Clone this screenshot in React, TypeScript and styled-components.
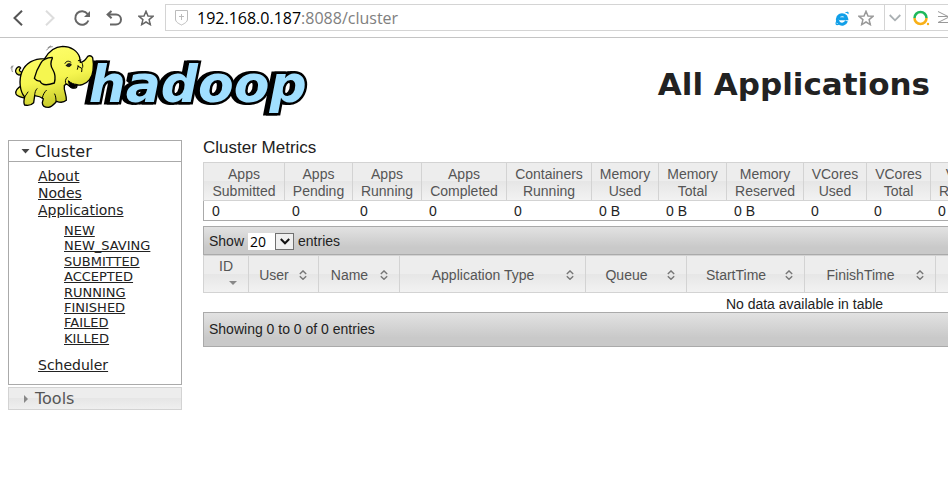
import React from "react";
import styled, { createGlobalStyle } from "styled-components";

const sans = `"Liberation Sans", Arial, sans-serif`;
const wide = `"DejaVu Sans", Verdana, sans-serif`;

const GlobalStyle = createGlobalStyle`
  *, *::before, *::after { box-sizing: border-box; }
  body { margin: 0; background: #fff; color: #222; font: 14px/17px ${sans}; }
`;

const Page = styled.div`
  overflow: hidden;
  padding-bottom: 64px;
`;

const BrowserBar = styled.header`
  display: flex;
  align-items: center;
  height: 38px;
  border-bottom: 1px solid #c4c4c4;
`;

const NavButtons = styled.nav`
  display: flex;
  gap: 8px;
  padding: 0 7px 2px 6px;
`;

const IconButton = styled.button`
  display: grid;
  place-items: center;
  width: 24px;
  height: 24px;
  padding: 0;
  border: 0;
  background: none;
`;

const AddressBar = styled.div`
  display: flex;
  flex: 1;
  align-items: center;
  height: 27px;
  margin-bottom: 2px;
  padding-left: 8px;
  border: 1px solid #d4d4d4;
  border-right: 0;
`;

const Address = styled.a`
  flex: 1;
  margin-left: 8px;
  color: #808080;
  font: 16px/24px "Open Sans", "Noto Sans", sans-serif;
  text-decoration: none;
`;

const Host = styled.span`
  color: #000;
`;

const DropButton = styled(IconButton)`
  width: 22px;
  height: 25px;
  margin-left: 6px;
  border: solid #d4d4d4;
  border-width: 0 1px;
`;

const SearchButton = styled(IconButton)`
  width: 42px;
  justify-items: start;
  padding-left: 6px;
`;

const Banner = styled.div`
  display: flex;
  align-items: flex-start;
  justify-content: space-between;
  height: 102px;
  padding-right: 18px;
`;

const Title = styled.h1`
  margin: 26px 0 0;
  font: bold 31px/40px ${wide};
  white-space: nowrap;
`;

const Wordmark = styled.text`
  font: italic bold 156px ${wide};
  fill: #a0dfff;
  stroke: #000;
  stroke-width: 15px;
  stroke-linejoin: miter;
  stroke-miterlimit: 2;
  paint-order: stroke;
  filter: drop-shadow(-9px 0 0 #000);
`;

const Columns = styled.div`
  display: flex;
  align-items: flex-start;
  gap: 21px;
  padding-left: 8px;
`;

const Sidebar = styled.aside`
  flex: none;
  width: 174px;
  font-family: ${wide};
`;

const SectionHead = styled.button<{ $open?: boolean }>`
  display: flex;
  align-items: center;
  gap: 5px;
  width: 100%;
  height: ${(p) => (p.$open ? 22 : 23)}px;
  margin-top: ${(p) => (p.$open ? 0 : 2)}px;
  padding: 1px 12px 0;
  border: 1px solid ${(p) => (p.$open ? "#aaa" : "#d3d3d3")};
  background: ${(p) => (p.$open ? "#fff" : "linear-gradient(#ededed 0 50%, #e6e6e6 50%, #efefef)")};
  color: ${(p) => (p.$open ? "#222" : "#555")};
  font: 16px/20px ${wide};
`;

const SectionBody = styled.div`
  height: 223px;
  padding: 6px 0 0 29px;
  border: 1px solid #aaa;
  border-top: 0;
`;

const MenuList = styled.ul`
  margin: 0;
  padding: 0;
  list-style: none;
`;

const SubList = styled(MenuList)`
  display: grid;
  grid-auto-rows: 1fr;
  height: 123px;
  margin: 4px 0 11px 26px;
  font-size: 13px;
  line-height: 15px;
`;

const MenuLink = styled.a`
  color: #222;
  text-decoration: underline;
`;

const Main = styled.main`
  flex: none;
  width: max-content;
`;

const TableTitle = styled.h2`
  margin: 0;
  padding-bottom: 7px;
  font: 17px/15px ${sans};
`;

const Table = styled.table`
  table-layout: fixed;
  width: 1203px;
  border-collapse: separate;
  border-spacing: 0;
`;

const MetricsTable = styled(Table)`
  margin-bottom: 5px;
  border-bottom: 1px solid #aaa;
`;

const HeadCell = styled.th`
  padding: 0;
  border: solid #d3d3d3;
  border-width: 1px 0 1px 1px;
  background: linear-gradient(#ededed 0 50%, #e6e6e6 50%, #f2f2f2);
  color: #555;
  font-weight: normal;
`;

const MetricHead = styled(HeadCell)`
  height: 38px;
  padding-top: 3px;
`;

const DataHead = styled(HeadCell)`
  height: 38px;
`;

const MetricCell = styled.td`
  height: 19px;
  padding: 1px 0 0 8px;
  line-height: 17px;

  &:first-child {
    border-left: 1px solid #aaa;
  }
`;

const ToolBar = styled.div<{ $foot?: boolean }>`
  display: flex;
  align-items: center;
  height: ${(p) => (p.$foot ? 35 : 29)}px;
  padding: ${(p) => (p.$foot ? 0 : 2)}px 5px 0;
  border: 1px solid #aaa;
  background: linear-gradient(#e2e2e2, #c9c9c9 75%);
`;

const EntriesLabel = styled.label`
  display: flex;
  align-items: center;
  gap: 4px;
`;

const SelectBox = styled.span`
  display: grid;
  grid-template-columns: 27px 19px;
  align-items: center;
  background: #fff;
`;

const EntriesSelect = styled.select`
  grid-area: 1 / 1 / 2 / 3;
  width: 46px;
  height: 17px;
  padding: 0 0 0 2px;
  border: 0;
  background: none;
  color: #000;
  font: 14px/16px "Open Sans", sans-serif;
  appearance: none;
`;

const SelectArrow = styled.span`
  display: grid;
  grid-area: 1 / 2;
  place-items: center;
  height: 17px;
  border: 1px solid #707070;
  background: #f0f0f0;
  pointer-events: none;
`;

const SortButton = styled.button<{ $stacked?: boolean }>`
  display: flex;
  flex-direction: ${(p) => (p.$stacked ? "column" : "row")};
  align-items: center;
  justify-content: center;
  width: 100%;
  padding: ${(p) => (p.$stacked ? "0" : "2px 11px 0 0")};
  border: 0;
  background: none;
  color: inherit;
  font: 14px/17px ${sans};
`;

const SortLabel = styled.span`
  flex: 1;
`;

const ActiveSort = styled.span`
  display: grid;
  width: 100%;
  height: 16px;
  padding-right: 11px;
  place-items: center end;
`;

const EmptyCell = styled.td`
  height: 19px;
  padding: 3px 0 0;
  text-align: center;
  line-height: 16px;
`;

const Star = ({ color }: { color: string }) => (
  <svg width="16" height="16" viewBox="0 0 16 16" fill="none" stroke={color} strokeWidth="1.5">
    <path d="M8 1.3 10 6l5 .3-3.9 3.3 1.2 5L8 12l-4.3 2.6 1.2-5L1 6.3 6 6Z" />
  </svg>
);

const SortIcon = () => (
  <svg width="8" height="10" viewBox="0 0 8 10" fill="none" stroke="#777" strokeWidth="1.4">
    <path d="M.8 4 4 .9 7.2 4M.8 6.2 4 9.3l3.2-3.1" />
  </svg>
);

const HadoopLogo = () => (
  <svg width="310" height="90" viewBox="0 0 930 270" role="img" aria-label="Hadoop">
    <defs>
      <linearGradient id="hide" x1="0" y1="0" x2="0.3" y2="1">
        <stop offset="0" stopColor="#ffff70" />
        <stop offset="0.6" stopColor="#f6f650" />
        <stop offset="1" stopColor="#c9cc2c" />
      </linearGradient>
    </defs>
    <Wordmark x="266" y="193">hadoop</Wordmark>
    <g stroke="#000" strokeWidth="4" strokeLinejoin="round" strokeLinecap="round" fill="url(#hide)">
      <path d="M64 111C52 112 45 104 47 97C49 88 58 82 62 90C57 94 55 100 66 103Z" />
      <path d="M66 142C52 150 44 157 48 168C52 176 62 177 74 180L92 150Z" />
      <path d="M134 62C146 40 165 26 188 25C213 25 233 39 239 58L241 73C250 72 256 66 261 58C265 51 275 52 278 59C281 74 281 84 279 98C277 119 264 135 247 140C240 142 234 142 230 140C233 151 224 152 215 149L200 138L193 142C190 157 201 172 199 187C192 193 181 194 170 190C163 197 156 207 145 208C133 208 127 202 127 194L130 182C122 176 112 174 104 173L101 194C94 201 84 204 74 201C69 194 73 182 74 177C59 160 56 125 66 101C77 76 101 62 134 62Z" />
    </g>
    <g fill="none" stroke="#000" strokeLinecap="round" strokeLinejoin="round">
      <path fill="#f5f650" strokeWidth="4" d="M157 58C140 59 127 66 122 76C113 90 107 105 103 121C108 127 114 130 120 129C125 143 143 142 163 135C167 120 166 108 159 96C151 84 152 70 157 61" />
      <path strokeWidth="3" d="M104 173C104 163 107 156 111 152M127 180C129 169 134 162 139 157M168 190C168 180 167 173 164 168M74 177L84 162M245 91L233 84M246 92L245 101M235 84L232 94M245 73C248 78 249 83 248 88M235 68L243 66M195 76C198 69 207 67 213 73M198 139C194 130 196 123 202 118" />
      <path strokeWidth="2" stroke="#555" d="M37 101C34 94 35 89 39 84M33 90L36 84M140 36C145 29 150 26 157 26M144 29L152 24" />
      <path fill="#000" strokeWidth="3" d="M206 129C214 136 222 139 230 139C228 150 217 153 210 147Z" />
      <path fill="#222" strokeWidth="2" d="M199 83C201 75 211 74 214 80C211 87 204 88 199 83Z" />
    </g>
  </svg>
);

const metrics = [
  ["Apps", "Submitted", "0", 81], ["Apps", "Pending", "0", 68], ["Apps", "Running", "0", 69],
  ["Apps", "Completed", "0", 85], ["Containers", "Running", "0", 85], ["Memory", "Used", "0 B", 67],
  ["Memory", "Total", "0 B", 68], ["Memory", "Reserved", "0 B", 77], ["VCores", "Used", "0", 63],
  ["VCores", "Total", "0", 64], ["VCores", "Reserved", "0", 77],
] as const;

const columns = [
  ["User", 70], ["Name", 81], ["Application Type", 186], ["Queue", 101], ["StartTime", 118], ["FinishTime", 131],
] as const;

const states = ["NEW", "NEW_SAVING", "SUBMITTED", "ACCEPTED", "RUNNING", "FINISHED", "FAILED", "KILLED"];

export default function App() {
  return (
    <Page>
      <GlobalStyle />
      <BrowserBar>
        <NavButtons aria-label="Browser">
          <IconButton aria-label="Back">
            <svg width="12" height="16" viewBox="0 0 12 16" fill="none" stroke="#555" strokeWidth="2"><path d="M10 .8 2.5 8l7.5 7.2" /></svg>
          </IconButton>
          <IconButton aria-label="Forward">
            <svg width="12" height="16" viewBox="0 0 12 16" fill="none" stroke="#ddd" strokeWidth="2"><path d="M2 .8 9.5 8 2 15.2" /></svg>
          </IconButton>
          <IconButton aria-label="Reload">
            <svg width="18" height="18" viewBox="0 0 18 18" fill="none" stroke="#666" strokeWidth="2"><path d="M14.6 5A6.8 6.8 0 1 0 15.4 11.500" /><path fill="#666" stroke="none" d="M17 2v6h-6Z" /></svg>
          </IconButton>
          <IconButton aria-label="Restore">
            <svg width="16" height="16" viewBox="0 0 16 16" fill="none" stroke="#666" strokeWidth="2"><path d="M5.500 1 1.600 4.600l4 3.700M1.600 4.600H10a5 5 0 0 1 0 10H4" /></svg>
          </IconButton>
          <IconButton aria-label="Favorites"><Star color="#666" /></IconButton>
        </NavButtons>
        <AddressBar>
          <svg width="15" height="17" viewBox="0 0 15 17" fill="none" stroke="#bbb"><path d="M1.500 1.500h12V10c0 3-3 4.500-6 6-3-1.500-6-3-6-6ZM7.500 5v6M5 7.500h5" /></svg>
          <Address href="#cluster"><Host>192.168.0.187</Host>:8088/cluster</Address>
          <IconButton aria-label="Compatibility mode">
            <svg width="14" height="16" viewBox="0 0 14 16" fill="none" stroke="#109fe8"><path strokeWidth="3" d="M11.500 11A4.700 4.700 0 1 1 11.700 8.700H4" /><path strokeWidth="1.200" d="M2 10.500C.3 14 1 15.500 4 14M10.500 2.800c2-1 3-.5 2.300 1.200" /></svg>
          </IconButton>
          <IconButton aria-label="Bookmark"><Star color="#999" /></IconButton>
          <DropButton aria-label="Address history">
            <svg width="12" height="8" viewBox="0 0 12 8" fill="none" stroke="#aab0b3" strokeWidth="1.800"><path d="m.7 1 5.300 5.300L11.300 1" /></svg>
          </DropButton>
          <SearchButton aria-label="Search">
            <svg width="36" height="18" viewBox="0 0 36 18" fill="none" strokeWidth="2.500">
              <path stroke="#1fb85c" d="M2.500 9a6 6 0 0 1 12 0" /><path stroke="#f8b017" d="M2.500 9a6 6 0 0 0 12 0" />
              <circle cx="16" cy="15" r="1.200" fill="#f8b017" />
              <path stroke="#999" strokeWidth="1" d="m26 2.500 10 5H26M36 8.500l-10 5h10" />
            </svg>
          </SearchButton>
        </AddressBar>
      </BrowserBar>

      <Banner>
        <HadoopLogo />
        <Title>All Applications</Title>
      </Banner>

      <Columns>
        <Sidebar>
          <SectionHead $open>
            <svg width="9" height="5" viewBox="0 0 9 5"><path d="M.5 0h8l-4 4.500Z" fill="#444" /></svg>
            Cluster
          </SectionHead>
          <SectionBody>
            <MenuList>
              <li><MenuLink href="#about">About</MenuLink></li>
              <li><MenuLink href="#nodes">Nodes</MenuLink></li>
              <li>
                <MenuLink href="#apps">Applications</MenuLink>
                <SubList>
                  {states.map((s) => <li key={s}><MenuLink href={`#${s}`}>{s}</MenuLink></li>)}
                </SubList>
              </li>
              <li><MenuLink href="#scheduler">Scheduler</MenuLink></li>
            </MenuList>
          </SectionBody>
          <SectionHead>
            <svg width="9" height="8" viewBox="0 0 9 8"><path d="M3 0v8l4-4Z" fill="#888" /></svg>
            Tools
          </SectionHead>
        </Sidebar>

        <Main>
          <TableTitle>Cluster Metrics</TableTitle>
          <MetricsTable>
            <colgroup>
              {metrics.map((m, i) => <col key={i} width={m[3]} />)}
              <col />
            </colgroup>
            <thead>
              <tr>
                {metrics.map((m, i) => <MetricHead key={i}>{m[0]}<br />{m[1]}</MetricHead>)}
                <MetricHead />
              </tr>
            </thead>
            <tbody>
              <tr>
                {metrics.map((m, i) => <MetricCell key={i}>{m[2]}</MetricCell>)}
                <MetricCell />
              </tr>
            </tbody>
          </MetricsTable>

          <ToolBar>
            <EntriesLabel>
              Show
              <SelectBox>
                <EntriesSelect defaultValue="20"><option>20</option><option>40</option></EntriesSelect>
                <SelectArrow>
                  <svg width="10" height="7" viewBox="0 0 10 7" fill="none" stroke="#111" strokeWidth="2"><path d="m.8 1 4.200 4.300L9.200 1" /></svg>
                </SelectArrow>
              </SelectBox>
              entries
            </EntriesLabel>
          </ToolBar>
          <Table>
            <colgroup>
              <col width={45} />
              {columns.map(([name, width]) => <col key={name} width={width} />)}
              <col />
            </colgroup>
            <thead>
              <tr>
                <DataHead>
                  <SortButton $stacked>
                    ID
                    <ActiveSort><svg width="8" height="4" viewBox="0 0 8 4"><path d="M0 0h8L4 4Z" fill="#888" /></svg></ActiveSort>
                  </SortButton>
                </DataHead>
                {columns.map(([name]) => (
                  <DataHead key={name}>
                    <SortButton><SortLabel>{name}</SortLabel><SortIcon /></SortButton>
                  </DataHead>
                ))}
                <DataHead />
              </tr>
            </thead>
            <tbody>
              <tr><EmptyCell colSpan={8}>No data available in table</EmptyCell></tr>
            </tbody>
          </Table>
          <ToolBar $foot>Showing 0 to 0 of 0 entries</ToolBar>
        </Main>
      </Columns>
    </Page>
  );
}
